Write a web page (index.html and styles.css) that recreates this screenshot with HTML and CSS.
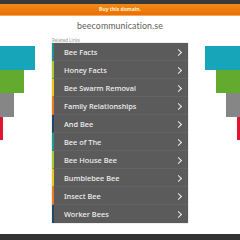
FILE: index.html
```html
<!DOCTYPE html>
<html>
<head>
<meta charset="utf-8">
<link rel="stylesheet" href="styles.css">
</head>
<body>
<div class="topbar"></div>
<div class="buybar">Buy this domain.</div>
<div class="main">
  <div class="side side-left">
    <div class="bar teal w35"></div>
    <div class="bar green w24"></div>
    <div class="bar gray w14"></div>
    <div class="bar red w3"></div>
  </div>
  <div class="center">
    <div class="title">beecommunication.se</div>
    <div class="related">Related Links</div>
    <ul class="links">
      <li class="c-teal">Bee Facts<span class="chev"></span></li>
      <li class="c-lime">Honey Facts<span class="chev"></span></li>
      <li class="c-yellow">Bee Swarm Removal<span class="chev"></span></li>
      <li class="c-orange">Family Relationships<span class="chev"></span></li>
      <li class="c-navy">And Bee<span class="chev"></span></li>
      <li class="c-teal2">Bee of The<span class="chev"></span></li>
      <li class="c-lime">Bee House Bee<span class="chev"></span></li>
      <li class="c-yellow">Bumblebee Bee<span class="chev"></span></li>
      <li class="c-orange">Insect Bee<span class="chev"></span></li>
      <li class="c-navy">Worker Bees<span class="chev"></span></li>
    </ul>
  </div>
  <div class="side side-right">
    <div class="bar teal w35"></div>
    <div class="bar green w24"></div>
    <div class="bar gray w14"></div>
    <div class="bar red w3"></div>
  </div>
</div>
<div class="bottombar"></div>
</body>
</html>
```
FILE: styles.css
```css
html, body {
  margin: 0;
  padding: 0;
  background: #fff;
  font-family: "Noto Sans", "Open Sans", sans-serif;
  width: 240px;
  height: 240px;
  overflow: hidden;
}
.topbar {
  height: 4px;
  background: #3a3a3a;
}
.buybar {
  height: 11px;
  background: linear-gradient(#f08a1a, #ec6f00);
  border-bottom: 1px solid #f5a860;
  color: #fff3d0;
  font-size: 5px;
  font-weight: 700;
  line-height: 11px;
  text-align: center;
}
.main {
  display: flex;
  height: 218px;
}
.side {
  width: 52px;
  display: flex;
  flex-direction: column;
  padding-top: 30px;
}
.side-right {
  align-items: flex-end;
}
.bar { height: 23.5px; }
.teal { background: #17a5ba; }
.green { background: #62ab2e; }
.gray { background: #868686; }
.red { background: #e01531; }
.w35 { width: 35px; }
.w24 { width: 24px; }
.w14 { width: 14px; }
.w3 { width: 3px; }
.center {
  width: 136px;
  display: flex;
  flex-direction: column;
}
.title {
  height: 20px;
  margin-top: 1px;
  text-align: center;
  color: #5e5e5e;
  font-family: "Lato", sans-serif;
  font-weight: 400;
  font-size: 8.8px;
  line-height: 18px;
  letter-spacing: 0.1px;
}
.related {
  height: 6px;
  font-size: 4.5px;
  color: #999;
  line-height: 6px;
}
.links {
  list-style: none;
  margin: 0;
  padding: 0;
  background: #5b5b5b;
  box-shadow: 0 0 1px #999;
}
.links li {
  position: relative;
  height: 18px;
  line-height: 18px;
  padding-left: 10px;
  color: #f0f0f0;
  font-size: 7.4px;
  font-weight: 500;
  border-left: 2px solid #17a5ba;
  box-sizing: border-box;
  border-bottom: 1px solid #636363;
}
.links li:last-child { border-bottom: none; }
.chev {
  position: absolute;
  right: 7px;
  top: 6.5px;
  width: 4px;
  height: 4px;
  border-top: 1px solid #eee;
  border-right: 1px solid #eee;
  transform: rotate(45deg);
}
.c-teal { border-left-color: #1e8f96 !important; }
.c-teal2 { border-left-color: #1f9a8d !important; }
.c-lime { border-left-color: #a8c92a !important; }
.c-yellow { border-left-color: #f0c419 !important; }
.c-orange { border-left-color: #ee7a1a !important; }
.c-navy { border-left-color: #1e4a66 !important; }
.bottombar {
  height: 8px;
  background: #333;
}
```
